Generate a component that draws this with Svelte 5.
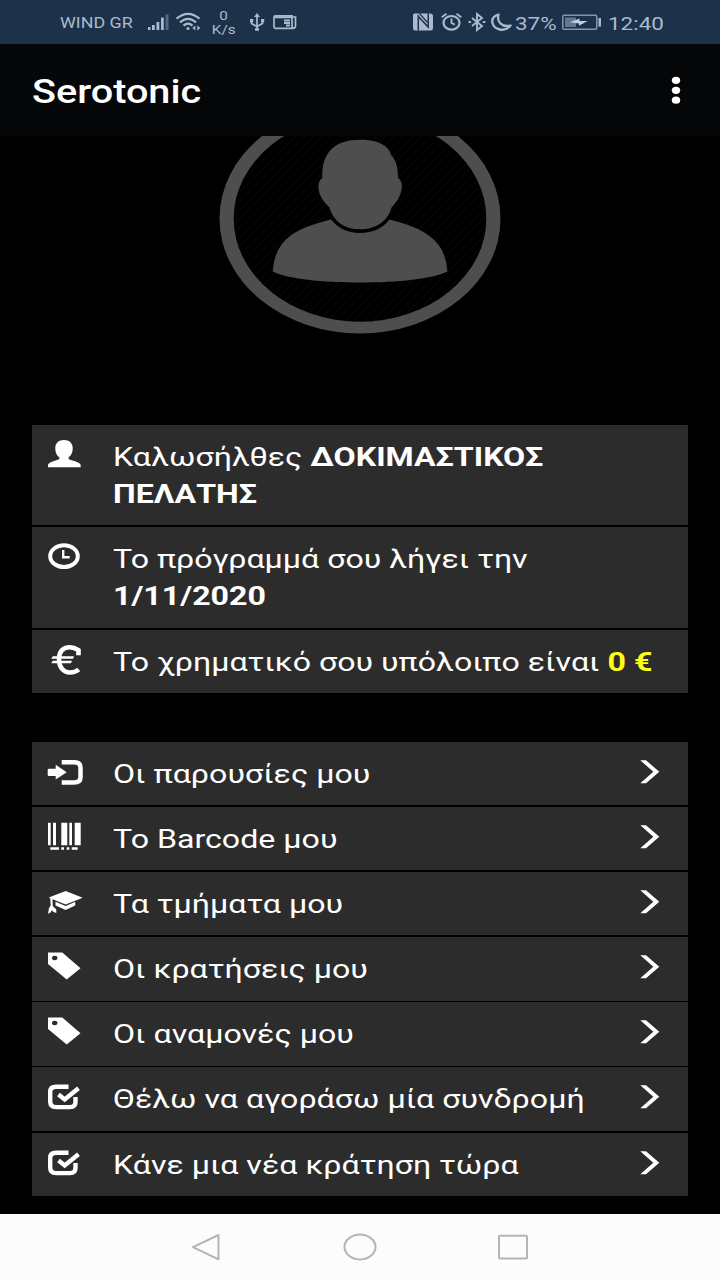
<script lang="ts">
    // Lines of the info list, each line is a list of text parts
    const info = [
        { icon: 'user', lines: [[{ text: 'Καλωσήλθες ' }, { text: 'ΔΟΚΙΜΑΣΤΙΚΟΣ', bold: true }], [{ text: 'ΠΕΛΑΤΗΣ', bold: true }]] },
        { icon: 'clock', lines: [[{ text: 'Το πρόγραμμά σου λήγει την' }], [{ text: '1/11/2020', bold: true }]] },
        { icon: 'euro', lines: [[{ text: 'Το χρηματικό σου υπόλοιπο είναι ' }, { text: '0 €', bold: true, yellow: true }]] }
    ];

    const menu = [
        { icon: 'login', text: 'Οι παρουσίες μου' },
        { icon: 'barcode', text: 'Το Barcode μου' },
        { icon: 'hat', text: 'Τα τμήματα μου' },
        { icon: 'tag', text: 'Οι κρατήσεις μου' },
        { icon: 'tag', text: 'Οι αναμονές μου' },
        { icon: 'check', text: 'Θέλω να αγοράσω μία συνδρομή' },
        { icon: 'check', text: 'Κάνε μια νέα κράτηση τώρα' }
    ];
</script>

{#snippet rowIcon(name)}
    <svg class="icon" width="40" height="38" viewBox="0 0 40 38" fill="#fff">
        {#if name === 'user'}
            <path d="M18 5C12.500 5 9.300 8.500 9.300 13C9.300 18 11 20.500 13.300 22.300V24.300C9 25.800 2 27.500 2 30.300V32.300H34.700V30.300C34.700 27.500 27 25.800 22.700 24.300V22.300C25 20.500 26.700 18 26.700 13C26.700 8.500 23.500 5 18 5Z" />
        {:else if name === 'clock'}
            <ellipse cx="18" cy="19.200" rx="13.800" ry="10.900" fill="none" stroke="#fff" stroke-width="4" />
            <path d="M17.200 13V20.300H23.700" fill="none" stroke="#fff" stroke-width="2.400" />
        {:else if name === 'euro'}
            <path d="M32.500 16.500V11.500Q28 8.500 24 8.500C16.500 8.500 13 13.500 13 20.500C13 28 17 33.800 24 33.800Q29 33.800 32.800 30.800" transform="translate(0 -1.300)" fill="none" stroke="#fff" stroke-width="4.600" />
            <path d="M6.800 16.300H28L27 18.800H5.300ZM6.800 20.800H26L25 23.300H5.300Z" />
        {:else if name === 'login'}
            <path d="M15.700 10.200H28Q34.500 10.200 34.500 15.500V25.200Q34.500 30.500 28 30.500H15.700" fill="none" stroke="#fff" stroke-width="4.500" />
            <path d="M3 16.700H9.700V12.700L20.700 20.200L9.700 27.500V24H3Q1.700 24 1.700 23V17.700Q1.700 16.700 3 16.700Z" />
        {:else if name === 'barcode'}
            <path d="M2 5.700h2.700v22.600H2zM7 5.700h3v22.600H7zM15.300 5.700h6v22.600h-6zM23.300 5.700H26v22.600h-2.700zM28.700 5.700h6v22.600h-6zM4.300 30.300H13v2.400H4.300zM15.300 30.300H18v2.400h-2.700zM20.700 30.300h2.600v2.400h-2.600zM25.700 30.300h6v2.400h-6z" />
        {:else if name === 'hat'}
            <path d="M2.700 15.400L19.700 9L36.700 15.700L19.700 22.400L6.500 17.200L6.800 24L10.300 27.500V31L7.500 30L6 28.300L4.500 30.500L2 31.700L3 26L4.700 23.500L4.200 16.200Z" />
            <path d="M9.500 19.700L19.700 24L29.200 19.700V23.500L19.700 28L9.500 23.500Z" />
        {:else if name === 'tag'}
            <path fill-rule="evenodd" d="M2 5.400H16.300L34.500 21.200L20.700 32.600L2 17ZM8.700 8.700A2.800 2.300 0 1 0 8.710 8.700Z" />
        {:else}
            <path d="M22.500 9.800H10Q4.200 9.800 4.200 15V24.800Q4.200 30.100 10 30.100H24Q29.500 30.100 29.500 25V20" fill="none" stroke="#fff" stroke-width="4.400" />
            <path d="M12.500 17.500L18.700 22.500L32.500 11.200" fill="none" stroke="#fff" stroke-width="4.400" />
        {/if}
    </svg>
{/snippet}

<div class="screen">
    <div class="status">
        <div class="side">
            <span class="carrier">WIND GR</span>
            <svg width="24" height="24" viewBox="0 0 24 24" fill="#a9bbcd">
                <path d="M1 17h2.500v3H1zM5 15h2.800v5H5zM9.500 12h2.800v8H9.500zM14 7.500h2.800V20H14z" />
                <path d="M18.500 4.500h3V20h-3z" fill="#506a86" />
            </svg>
            <svg class="wifi" width="28" height="24" viewBox="0 0 28 24" fill="none" stroke="#a9bbcd" stroke-width="2.200">
                <path d="M1.500 8.700Q13 -1 24.500 8.700M5 12.300Q13 5.300 21 12.300M8.500 15.600Q13 11.700 17.500 15.600" />
                <circle cx="13" cy="18.500" r="1.600" fill="#a9bbcd" stroke="none" />
                <path d="M20.300 15.500L17.300 18L20.300 20.500ZM22.300 15.500L25.300 18L22.300 20.500Z" fill="#a9bbcd" stroke="none" />
            </svg>
            <span class="speed"><span>0</span><span>K/s</span></span>
            <svg class="usb" width="16" height="24" viewBox="0 0 16 24" fill="none" stroke="#a9bbcd" stroke-width="1.700">
                <path d="M8 19V6M2.500 10V13.500L8 16.500L13.500 13.500V10" />
                <path d="M8 3L11 7H5Z" fill="#a9bbcd" stroke="none" />
                <path d="M1 9h3.200v3.200H1zM12 9h3.200v3.200H12zM6 18.300h4v2.500H6z" fill="#a9bbcd" stroke="none" />
            </svg>
            <svg class="news" width="26" height="24" viewBox="0 0 26 24" fill="none" stroke="#a9bbcd" stroke-width="1.700">
                <path d="M3.500 5.800H20V18.300H3.500Q2 18.300 2 16.800V7.300Q2 5.800 3.500 5.800ZM20 7H23.500V16Q23.500 18.300 20.500 18.300" />
                <path d="M2.500 7.300H20M12 10.500H18M12 13H18M14 15.500H18" stroke-width="1.900" />
            </svg>
        </div>
        <div class="side right">
            <svg width="24" height="24" viewBox="0 0 24 24">
                <path d="M1.500 3.500H17Q20 3.500 20 6V18Q20 20.500 18 20.500H2Q0 20.500 0 18V5Q0 3.500 1.500 3.500Z" fill="#a9bbcd" />
                <path d="M5.300 20.500V6.500L15.200 17V6.500M15.200 3.500V15M5.300 5V18" fill="none" stroke="#1d314a" stroke-width="1.500" />
                <path d="M6.500 3.500L14.500 12.500" fill="none" stroke="#1d314a" stroke-width="1.200" />
            </svg>
            <svg class="alarm" width="24" height="24" viewBox="0 0 24 24" fill="none" stroke="#a9bbcd" stroke-width="2.200">
                <ellipse cx="10.500" cy="12.800" rx="8" ry="6.800" />
                <path d="M10.500 8.500V13L13.800 14.700M0.700 7.200L5.500 3.800M15.500 3.800L20.300 7.200" stroke-width="1.900" />
            </svg>
            <svg class="bt" width="20" height="24" viewBox="0 0 20 24" fill="none" stroke="#a9bbcd" stroke-width="1.900">
                <path d="M4 8L14 16L9 20V4L14 8L4 16" />
                <path d="M0.500 12h2.500M14.800 12h2.500" stroke-width="2.200" />
            </svg>
            <svg class="moon" width="24" height="24" viewBox="0 0 24 24" fill="none" stroke="#a9bbcd" stroke-width="2.300" stroke-linejoin="round">
                <path d="M7.500 4.500C2.500 6 0.700 9.500 1.500 13C3 19.500 13.500 23 19.500 15.500C11 17.500 5.500 12 7.500 4.500Z" />
            </svg>
            <span class="percent">37%</span>
            <svg class="battery" width="42" height="24" viewBox="0 0 42 24">
                <rect x="0.800" y="5.300" width="34" height="14" rx="1.500" fill="none" stroke="#8497ab" stroke-width="1.500" />
                <path d="M3 7.500h11v9.500H3z" fill="#607890" />
                <path d="M8 12.200L17.500 8.500V11H25.500L17 15.800V13.400Z" fill="#c2d0dd" />
                <path d="M36.500 8h2.500v8.500h-2.500z" fill="#a9bbcd" />
            </svg>
            <span class="time">12:40</span>
        </div>
    </div>

    <header>
        <h1>Serotonic</h1>
        <svg width="12" height="32" viewBox="0 0 12 32" fill="#fff">
            <ellipse cx="6" cy="6.300" rx="4.200" ry="3.600" />
            <ellipse cx="6" cy="16.300" rx="4.200" ry="3.600" />
            <ellipse cx="6" cy="26.200" rx="4.200" ry="3.600" />
        </svg>
    </header>

    <div class="avatar">
        <svg width="284" height="204" viewBox="218 136 284 204" fill="#4e4e4e">
            <defs>
                <pattern id="stripes" width="9" height="9" patternUnits="userSpaceOnUse">
                    <path d="M0 9L9 0" stroke="#050505" stroke-width="1.500" />
                </pattern>
            </defs>
            <ellipse cx="360" cy="218.500" rx="140.500" ry="115" />
            <ellipse cx="360" cy="218.500" rx="126.300" ry="103.200" fill="#000" />
            <ellipse cx="360" cy="218.500" rx="126.300" ry="103.200" fill="url(#stripes)" />
            <path d="M360 139.700C377 139.700 389 145 391 155C396 160 398 167 398 178C402.500 181 403 187 400 195C397.500 201 394 205 391.500 207.500C388 221 376 229.300 360 229.300C344 229.300 333 221 329.500 207.500C326 204 322 200 319.800 194C317.500 187 318 181 322.300 178C321.500 153 334 139.700 360 139.700Z" />
            <path d="M331 219.500C338 228 347 233 360 233C373 233 383 228 389.500 219.500Q416 226 428 235Q446 247 447.500 271.500C432 279 398 282.500 360 282.500C322 282.500 288 279 272.700 271.500Q274 247 292 234.500Q304 226 331 219.500Z" />
        </svg>
    </div>

    <ul class="info">
        {#each info as item}
            <li>
                {@render rowIcon(item.icon)}
                <div class="text">
                    {#each item.lines as line}
                        <div>{#each line as part}<span class:bold={part.bold} class:yellow={part.yellow}>{part.text}</span>{/each}</div>
                    {/each}
                </div>
            </li>
        {/each}
    </ul>

    <ul class="menu">
        {#each menu as item}
            <li>
                {@render rowIcon(item.icon)}
                <div class="text">{item.text}</div>
                <svg class="chevron" width="20" height="24" viewBox="0 0 20 24" fill="#fff">
                    <path d="M0.300 0.300H6L19.300 11.800L6 23.200H0.300L13.300 11.800Z" />
                </svg>
            </li>
        {/each}
    </ul>

    <nav>
        <svg width="32" height="30" viewBox="0 0 32 30"><path d="M2 15.200L27.500 3V27.300Z" /></svg>
        <svg width="34" height="30" viewBox="0 0 34 30"><ellipse cx="17" cy="15" rx="15.500" ry="12.400" /></svg>
        <svg width="32" height="30" viewBox="0 0 32 30"><rect x="2" y="3.800" width="28" height="22.700" rx="0.800" /></svg>
    </nav>
</div>

<style>
    :global(body) {
        background: #000;
    }
    .screen {
        width: 720px;
        height: 1280px;
        display: flex;
        flex-direction: column;
        background: #000;
        color: #fff;
        font-family: Roboto, "Noto Sans", sans-serif;
        overflow: hidden;
    }
    .screen svg {
        display: block;
        flex-shrink: 0;
    }
    .status {
        height: 44px;
        display: flex;
        justify-content: space-between;
        background: #1d314a;
        color: #a9bbcd;
        padding: 0 55px 0 60px;
    }
    .side {
        display: flex;
        align-items: center;
    }
    .side span {
        white-space: nowrap;
        transform-origin: left center;
    }
    .carrier {
        width: 87px;
        margin-top: 2px;
        font-size: 15px;
        transform: scaleX(1.19);
    }
    .wifi {
        margin-left: 4px;
    }
    .speed {
        width: 27px;
        margin-top: 2px;
        margin-left: 7px;
        display: flex;
        flex-direction: column;
        align-items: center;
        font-size: 12.5px;
        line-height: 14.5px;
    }
    .speed span {
        transform: scaleX(1.22);
        transform-origin: center;
    }
    .usb {
        margin-left: 12px;
    }
    .news {
        margin-left: 7px;
    }
    .alarm {
        margin-left: 4px;
    }
    .bt {
        margin-left: 3px;
    }
    .moon {
        margin-left: 3px;
    }
    .percent {
        width: 46px;
        margin-top: 2px;
        font-size: 19px;
        transform: scaleX(1.18);
    }
    .battery {
        margin-left: 1px;
    }
    .time {
        width: 57px;
        margin-top: 2px;
        margin-left: 4px;
        font-size: 19px;
        transform: scaleX(1.18);
    }
    header {
        height: 92px;
        display: flex;
        justify-content: space-between;
        align-items: center;
        padding: 0 38px 0 32px;
        background: #040608;
    }
    h1 {
        margin: 2px 0 0;
        font-size: 33px;
        font-weight: 500;
        transform: scaleX(1.2);
        transform-origin: left;
    }
    .avatar {
        height: 289px;
        display: flex;
        justify-content: center;
    }
    ul {
        list-style: none;
        margin: 0 32px;
        padding: 0;
        display: flex;
        flex-direction: column;
        gap: 1.8px;
    }
    li {
        display: flex;
        align-items: flex-start;
        background: #2c2c2c;
        padding: 13px 28px 13.3px 14px;
    }
    .icon {
        margin: -3px 26.5px -3px 0;
    }
    .text {
        flex: 1;
        position: relative;
        top: 1px;
        font-size: 26.4px;
        line-height: 37px;
        white-space: nowrap;
        transform: scaleX(1.218);
        transform-origin: left;
    }
    .bold {
        font-weight: 700;
    }
    .yellow {
        color: #ffff14;
    }
    .info {
        gap: 2px;
    }
    .info li {
        padding-bottom: 13.4px;
    }
    .menu {
        margin-top: 48.8px;
    }
    .chevron {
        margin-top: 5px;
    }
    nav {
        height: 65.6px;
        margin-top: auto;
        display: flex;
        align-items: center;
        justify-content: center;
        gap: 120px;
        background: #fcfcfc;
    }
    nav svg {
        fill: none;
        stroke: #b4b4b4;
        stroke-width: 2;
        stroke-linejoin: round;
    }
</style>
